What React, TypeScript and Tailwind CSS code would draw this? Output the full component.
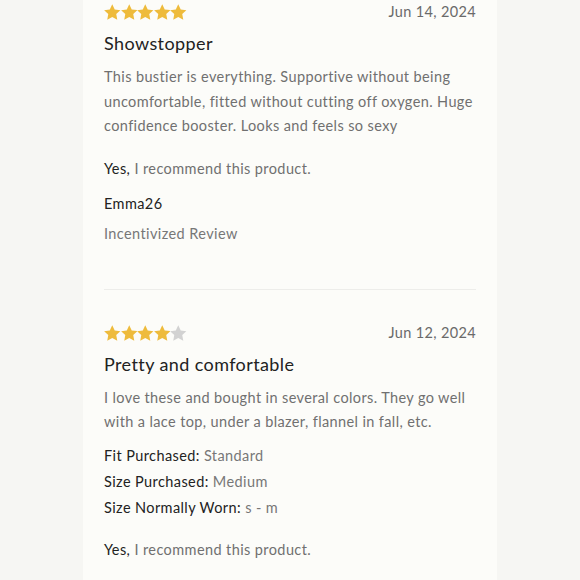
import React from "react";

interface Review {
  rating: number;
  date: string;
  title: string;
  body: string;
  details?: { label: string; value: string }[];
  author?: string;
  badge?: string;
}

const REVIEWS: Review[] = [
  {
    rating: 5,
    date: "Jun 14, 2024",
    title: "Showstopper",
    body: "This bustier is everything. Supportive without being uncomfortable, fitted without cutting off oxygen. Huge confidence booster. Looks and feels so sexy",
    author: "Emma26",
    badge: "Incentivized Review",
  },
  {
    rating: 4,
    date: "Jun 12, 2024",
    title: "Pretty and comfortable",
    body: "I love these and bought in several colors. They go well with a lace top, under a blazer, flannel in fall, etc.",
    details: [
      { label: "Fit Purchased:", value: "Standard" },
      { label: "Size Purchased:", value: "Medium" },
      { label: "Size Normally Worn:", value: "s - m" },
    ],
  },
];

function Star({ filled }: { filled: boolean }) {
  return (
    <svg width="16.5" height="16" viewBox="0 0 24 23" className={filled ? "fill-[#eebb3c]" : "fill-[#d2d2d2]"}>
      <path d="M12 0.3l3.6 7.5 8.2 1-6 5.7 1.5 8.1-7.3-4-7.3 4 1.5-8.1-6-5.7 8.2-1z" />
    </svg>
  );
}

function Stars({ rating }: { rating: number }) {
  return (
    <div className="flex">
      {[1, 2, 3, 4, 5].map((i) => (
        <Star key={i} filled={i <= rating} />
      ))}
    </div>
  );
}

function ReviewItem({ review }: { review: Review }) {
  return (
    <div>
      <div className="flex items-center justify-between h-[20px]">
        <Stars rating={review.rating} />
        <span className="text-[14.5px] tracking-[0.35px] text-[#6a6a6a]">{review.date}</span>
      </div>
      <h3 className="mt-[9px] text-[18px] leading-[24px] tracking-[0.4px] text-[#222]">{review.title}</h3>
      <p className="mt-[10px] text-[14.5px] leading-[24.5px] tracking-[0.38px] text-[#707070]">{review.body}</p>
      {review.details && (
        <div className="mt-[9px] flex flex-col gap-[2px]">
          {review.details.map((d) => (
            <p key={d.label} className="text-[14.5px] leading-[24px] tracking-[0.4px]">
              <span className="text-[#222]">{d.label}</span>{" "}
              <span className="text-[#777]">{d.value}</span>
            </p>
          ))}
        </div>
      )}
      <p className="mt-[18px] text-[14.5px] leading-[24px] tracking-[0.4px]">
        <span className="text-[#222]">Yes,</span> <span className="text-[#707070]">I recommend this product.</span>
      </p>
      {review.author && (
        <p className="mt-[11px] text-[14.5px] leading-[24px] tracking-[0.4px] text-[#222]">{review.author}</p>
      )}
      {review.badge && (
        <p className="mt-[6px] text-[14.5px] leading-[24px] tracking-[0.4px] text-[#777]">{review.badge}</p>
      )}
    </div>
  );
}

export default function App() {
  return (
    <div className="h-[580px] w-[580px] overflow-hidden bg-[#f6f6f3] font-['Lato',sans-serif]">
      <div className="ml-[83px] w-[414px] h-full bg-[#fcfcf9] px-[21px] pt-[2px]">
        <ReviewItem review={REVIEWS[0]} />
        <div className="mt-[43px] mb-[33px] h-px bg-[#ededea]" />
        <ReviewItem review={REVIEWS[1]} />
      </div>
    </div>
  );
}
